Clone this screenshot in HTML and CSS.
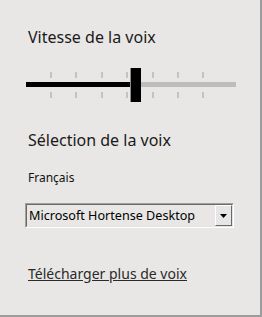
FILE: index.html
```html
<!DOCTYPE html>
<html lang="fr">
<head>
<meta charset="utf-8">
<link rel="stylesheet" href="styles.css">
</head>
<body>
<div class="panel">
  <h2 class="title title-speed">Vitesse de la voix</h2>
  <svg class="slider" width="210" height="34" viewBox="0 0 210 34">
    <g fill="#c3c3c3">
      <rect x="24" y="4" width="2" height="6"/><rect x="49" y="4" width="2" height="6"/>
      <rect x="75" y="4" width="2" height="6"/><rect x="100" y="4" width="2" height="6"/>
      <rect x="126" y="4" width="2" height="6"/><rect x="151" y="4" width="2" height="6"/>
      <rect x="176" y="4" width="2" height="6"/>
      <rect x="24" y="24" width="2" height="6"/><rect x="49" y="24" width="2" height="6"/>
      <rect x="75" y="24" width="2" height="6"/><rect x="100" y="24" width="2" height="6"/>
      <rect x="126" y="24" width="2" height="6"/><rect x="151" y="24" width="2" height="6"/>
      <rect x="176" y="24" width="2" height="6"/>
    </g>
    <rect x="0" y="14" width="106" height="5" fill="#000"/>
    <rect x="106" y="14" width="104" height="5" fill="#bdbdbd"/>
    <rect x="104" y="0" width="11" height="34" fill="#000"/>
    <rect x="104" y="0" width="1" height="34" fill="#8c8c8c"/>
  </svg>
  <h2 class="title title-select">Sélection de la voix</h2>
  <div class="lang">Français</div>
  <div class="combo">
    <div class="combo-inner">
      <span class="combo-text">Microsoft Hortense Desktop</span>
      <span class="combo-btn"><svg width="7" height="4" viewBox="0 0 7 4"><path d="M0 0H7L3.5 4Z" fill="#000"/></svg></span>
    </div>
  </div>
  <a class="more" href="#">Télécharger plus de voix</a>
</div>
</body>
</html>
```
FILE: styles.css
```css
html, body {
  margin: 0;
  padding: 0;
}
body {
  width: 262px;
  height: 317px;
  background: #e8e7e5;
  font-family: "Noto Sans", "Open Sans", sans-serif;
  color: #000;
}
.panel {
  box-sizing: border-box;
  width: 262px;
  height: 317px;
  border-right: 2px solid #9c9c9c;
  border-bottom: 2px solid #9c9c9c;
  display: flex;
  flex-direction: column;
  align-items: flex-start;
}
.title {
  margin: 0;
  font-weight: 400;
  font-size: 16px;
  line-height: 20px;
  color: #1a1a1a;
  padding-left: 28px;
  white-space: nowrap;
}
.title-speed {
  margin-top: 27px;
}
.slider {
  display: block;
  margin-top: 21px;
  margin-left: 26px;
}
.title-select {
  margin-top: 28px;
}
.lang {
  font-size: 12px;
  line-height: 16px;
  padding-left: 28px;
  margin-top: 20px;
  color: #111;
}
.combo {
  margin-top: 17px;
  margin-left: 25px;
  width: 209px;
  box-sizing: border-box;
  border-top: 1px solid #a0a0a0;
  border-left: 1px solid #a0a0a0;
  border-right: 1px solid #ffffff;
  border-bottom: 1px solid #ffffff;
}
.combo-inner {
  display: flex;
  align-items: center;
  justify-content: space-between;
  height: 21px;
  border-top: 1px solid #6a6a6a;
  border-left: 1px solid #6a6a6a;
  border-right: 1px solid #e3e3e3;
  border-bottom: 1px solid #e3e3e3;
}
.combo-text {
  font-size: 12.6px;
  padding-left: 2px;
  white-space: nowrap;
}
.combo-btn {
  box-sizing: border-box;
  width: 17px;
  height: 21px;
  display: flex;
  align-items: center;
  justify-content: center;
  background: #e6e6e6;
  border-top: 1px solid #fff;
  border-left: 1px solid #fff;
  border-right: 1px solid #696969;
  border-bottom: 1px solid #696969;
}
.combo-btn svg {
  display: block;
}
.more {
  margin-top: 37px;
  margin-left: 28px;
  font-size: 14px;
  line-height: 18px;
  color: #2b2b2b;
  text-decoration: underline;
  white-space: nowrap;
}
```
